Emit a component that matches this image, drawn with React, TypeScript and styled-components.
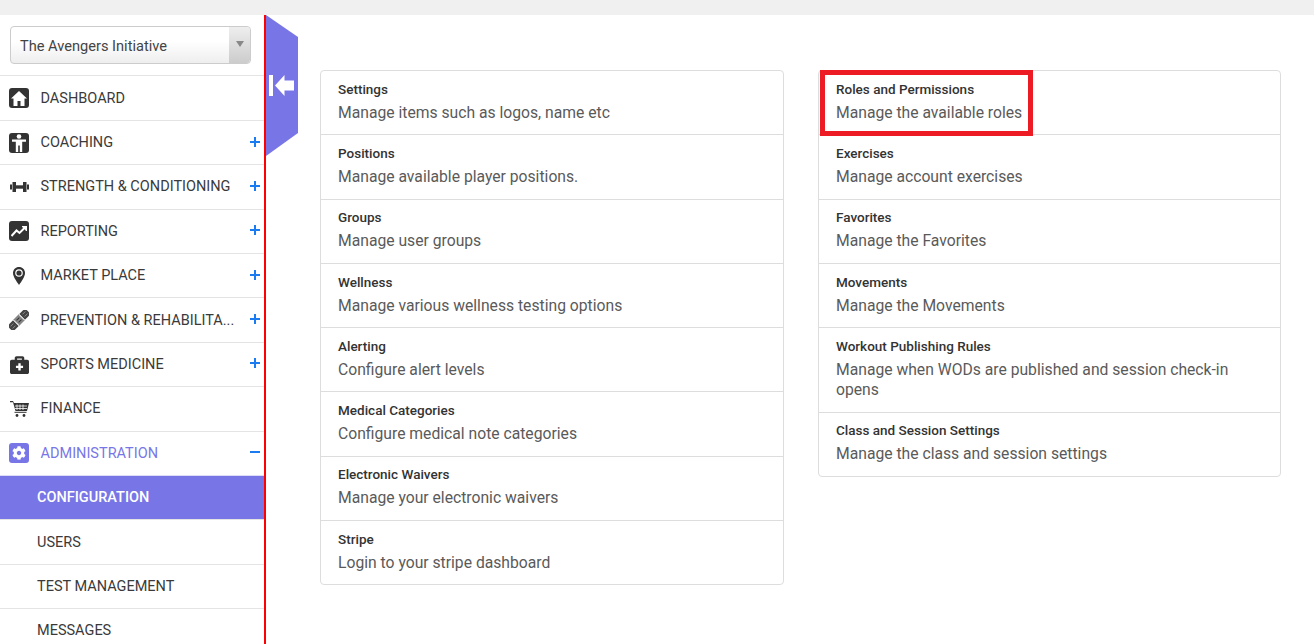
import * as React from "react";
import { createGlobalStyle, styled } from "styled-components";
import { FaBriefcaseMedical, FaCog } from "react-icons/fa";

const GlobalStyle = createGlobalStyle`
    html, body {
        margin: 0;
        height: 100%;
        overflow: hidden;
        background: #fff;
        font-family: Roboto, "Liberation Sans", sans-serif;
    }
    * {
        box-sizing: border-box;
    }
`;

const Page = styled.div`
    display: flex;
    flex-direction: column;
    height: 644px;
    overflow: hidden;
`;

const TopBar = styled.div`
    height: 15px;
    flex: none;
    background: #f0f0f0;
`;

const Body = styled.div`
    display: flex;
    flex: 1;
    min-height: 0;
`;

const Sidebar = styled.aside`
    position: relative;
    flex: none;
    width: 266px;
    border-right: 2px solid #f00;
`;

const SelectWrap = styled.div`
    height: 60.45px;
    padding: 11px 13px 0 10px;
`;

const Select = styled.div`
    display: flex;
    height: 38px;
    border: 1px solid #ccc;
    border-radius: 4px;
    background: linear-gradient(#fff 40%, #eee);
    color: #444;
    font-size: 14.6px;
    line-height: 38px;
`;

const SelectText = styled.span`
    flex: 1;
    padding-left: 9px;
`;

const SelectArrow = styled.span`
    display: flex;
    width: 21px;
    align-items: center;
    justify-content: center;
    background: linear-gradient(#eee, #ccc);
    border-radius: 0 4px 4px 0;

    &::after {
        content: "";
        margin-top: -2px;
        border-left: 4px solid transparent;
        border-right: 4px solid transparent;
        border-top: 6px solid #888;
    }
`;

const NavRow = styled.div<{ $active?: boolean }>`
    display: flex;
    align-items: center;
    height: 44.4px;
    padding-left: 9px;
    border-top: 1px solid #e4e4e4;
    color: ${props => (props.$active ? "#7876e6" : "#3a3a3a")};
    font-size: 14.5px;
    white-space: nowrap;
`;

const NavIcon = styled.span`
    display: flex;
    flex: none;
    width: 20px;
    height: 20px;
    margin-right: 11.5px;
    align-items: center;
    justify-content: center;
`;

const IconTile = styled.span<{ $color?: string }>`
    display: flex;
    width: 20px;
    height: 20px;
    align-items: center;
    justify-content: center;
    border-radius: 3px;
    background: ${props => props.$color ?? "#333"};
    color: #fff;
`;

const NavLabel = styled.span`
    flex: 1;
    min-width: 0;
`;

const NavToggle = styled.span`
    position: relative;
    flex: none;
    width: 10px;
    height: 10px;
    margin: 0 4px 2px 0;

    &::before {
        content: "";
        position: absolute;
        left: 0;
        right: 0;
        top: 4px;
        height: 2px;
        background: #1a7cf0;
    }
`;

const NavPlus = styled(NavToggle)`
    &::after {
        content: "";
        position: absolute;
        top: 0;
        bottom: 0;
        left: 4px;
        width: 2px;
        background: #1a7cf0;
    }
`;

const SubRow = styled.div<{ $active?: boolean }>`
    display: flex;
    align-items: center;
    height: 44.4px;
    padding-left: 37px;
    border-top: 1px solid ${props => (props.$active ? "#dcdcf5" : "#e4e4e4")};
    background: ${props => (props.$active ? "#7876e6" : "transparent")};
    color: ${props => (props.$active ? "#fff" : "#3a3a3a")};
    font-size: 14.5px;
    font-weight: ${props => (props.$active ? 500 : 400)};
`;

const CollapseHandle = styled.div`
    position: absolute;
    top: 0;
    left: 266px;
    display: flex;
    width: 32px;
    height: 141px;
    align-items: center;
    justify-content: center;
    padding-bottom: 1px;
    padding-right: 1px;
    background: #7876e6;
    clip-path: polygon(0 0, 100% 15.6%, 100% 83.6%, 0 100%);
    color: #fff;
`;

const Main = styled.main`
    display: grid;
    flex: 1;
    grid-template-columns: 464px 463px;
    column-gap: 34px;
    align-items: start;
    padding: 55px 0 0 54px;
`;

const Card = styled.div`
    position: relative;
    border: 1px solid #ddd;
    border-radius: 4px;
`;

const CardItem = styled.div`
    padding: 9.8px 17px 11.18px;
    border-top: 1px solid #ddd;

    &:first-child {
        border-top: 0;
    }
`;

const CardTitle = styled.div`
    color: #333;
    font-size: 13.5px;
    font-weight: 500;
    line-height: 17px;
    margin-bottom: 5px;
`;

const CardText = styled.div`
    color: #5a5a5a;
    font-size: 15.7px;
    line-height: 20.3px;
`;

const Highlight = styled.div`
    position: absolute;
    top: -1px;
    left: 1px;
    width: 213px;
    height: 66px;
    border: 5px solid #ed1c24;
`;

const HomeIcon = () => (
    <svg width="16" height="15" viewBox="0 0 16 15" fill="#fff">
        <path d="M8 0 16 7.500h-2.500V15H9.500v-5h-3v5H2.500V7.500H0z" />
    </svg>
);

const MaleIcon = () => (
    <svg width="16" height="18" viewBox="0 0 16 18" fill="#fff">
        <circle cx="8" cy="2.500" r="2.300" />
        <path d="M1 5.500h14v2.200h-3.800V18H8.800v-6.500H7.200V18H4.800V7.700H1z" />
    </svg>
);

const DumbbellIcon = () => (
    <svg width="19" height="12" viewBox="0 0 19 12" fill="#333">
        <path d="M0 3.500h2v5H0zM2.500 1h3.500v10H2.500zM13 1h3.500v10H13zM17 3.500h2v5h-2z" />
        <path d="M6 4.300h7v3.400H6z" />
    </svg>
);

const ChartIcon = () => (
    <svg width="16" height="11" viewBox="0 0 16 11" fill="none" stroke="#fff" strokeWidth="2">
        <path d="M0.500 10 5.500 4.500 8.500 7 14 1.500" />
        <path d="M11 0.500h4.500V5" strokeWidth="1.600" fill="#fff" />
    </svg>
);

const MarkerIcon = () => (
    <svg width="12" height="18" viewBox="0 0 12 18">
        <path d="M6 0C2.600 0 0 2.600 0 6c0 3.500 3.500 8.500 6 12 2.500-3.500 6-8.500 6-12 0-3.400-2.600-6-6-6z" fill="#333" />
        <circle cx="6" cy="6" r="3.800" fill="#fff" />
        <circle cx="6" cy="6" r="2.600" fill="#333" />
    </svg>
);

const BandAidIcon = () => (
    <svg width="20" height="20" viewBox="0 0 20 20">
        <g transform="rotate(-45 10 10)">
            <rect x="-2.500" y="6" width="25" height="8" rx="3.500" fill="#444" />
            <rect x="6" y="6" width="8" height="8" fill="#888" />
            <path d="M6 6v8M14 6v8" stroke="#fff" strokeWidth="1" />
            <path d="M-0.500 8.500h4M-0.500 11.500h4M16.500 8.500h4M16.500 11.500h4" stroke="#999" strokeWidth="0.800" />
            <path d="M8 8.500h4M8 11.500h4" stroke="#333" strokeWidth="1" />
        </g>
    </svg>
);

const CartIcon = () => (
    <svg width="19" height="16" viewBox="0 0 19 16" fill="#333">
        <path d="M0 0h3l1 2h15l-2 8H5.500L3 1.300H0z" />
        <path d="M4.500 10.800h12v1h-12z" />
        <circle cx="7" cy="14.500" r="1.400" />
        <circle cx="14" cy="14.500" r="1.400" />
        <path d="M7 3.500v5.500M10 3.500v5.500M13 3.500v5.500M5 5h12M5 7.500h12" stroke="#fff" strokeWidth="0.800" />
    </svg>
);

const collapseIcon = (
    <svg width="25" height="21" viewBox="0 0 25 21" fill="currentColor">
        <rect x="0" y="0" width="4" height="21" />
        <path d="M6 10.500 15.500 0v5.500H25v10h-9.500V21z" />
    </svg>
);

type NavEntry = {
    label: string;
    icon: React.ReactNode;
    expandable?: boolean;
};

const navEntries: NavEntry[] = [
    { label: "DASHBOARD", icon: <IconTile><HomeIcon /></IconTile> },
    { label: "COACHING", icon: <IconTile><MaleIcon /></IconTile>, expandable: true },
    { label: "STRENGTH & CONDITIONING", icon: <DumbbellIcon />, expandable: true },
    { label: "REPORTING", icon: <IconTile><ChartIcon /></IconTile>, expandable: true },
    { label: "MARKET PLACE", icon: <MarkerIcon />, expandable: true },
    { label: "PREVENTION & REHABILITA...", icon: <BandAidIcon />, expandable: true },
    { label: "SPORTS MEDICINE", icon: <FaBriefcaseMedical size={19} color="#333" />, expandable: true },
    { label: "FINANCE", icon: <CartIcon /> },
];

const leftItems = [
    ["Settings", "Manage items such as logos, name etc"],
    ["Positions", "Manage available player positions."],
    ["Groups", "Manage user groups"],
    ["Wellness", "Manage various wellness testing options"],
    ["Alerting", "Configure alert levels"],
    ["Medical Categories", "Configure medical note categories"],
    ["Electronic Waivers", "Manage your electronic waivers"],
    ["Stripe", "Login to your stripe dashboard"],
];

const rightItems = [
    ["Roles and Permissions", "Manage the available roles"],
    ["Exercises", "Manage account exercises"],
    ["Favorites", "Manage the Favorites"],
    ["Movements", "Manage the Movements"],
    ["Workout Publishing Rules", "Manage when WODs are published and session check-in opens"],
    ["Class and Session Settings", "Manage the class and session settings"],
];

const subEntries = ["CONFIGURATION", "USERS", "TEST MANAGEMENT", "MESSAGES"];

const renderItems = (items: string[][]) =>
    items.map(([title, text]) => (
        <CardItem key={title}>
            <CardTitle>{title}</CardTitle>
            <CardText>{text}</CardText>
        </CardItem>
    ));

const App = () => (
    <Page>
        <GlobalStyle />
        <TopBar />
        <Body>
            <Sidebar>
                <SelectWrap>
                    <Select>
                        <SelectText>The Avengers Initiative</SelectText>
                        <SelectArrow />
                    </Select>
                </SelectWrap>
                {navEntries.map(entry => (
                    <NavRow key={entry.label}>
                        <NavIcon>{entry.icon}</NavIcon>
                        <NavLabel>{entry.label}</NavLabel>
                        {entry.expandable && <NavPlus />}
                    </NavRow>
                ))}
                <NavRow $active>
                    <NavIcon>
                        <IconTile $color="#7876e6">
                            <FaCog size={14} />
                        </IconTile>
                    </NavIcon>
                    <NavLabel>ADMINISTRATION</NavLabel>
                    <NavToggle />
                </NavRow>
                {subEntries.map((label, index) => (
                    <SubRow key={label} $active={index === 0}>
                        {label}
                    </SubRow>
                ))}
                <CollapseHandle>{collapseIcon}</CollapseHandle>
            </Sidebar>
            <Main>
                <Card>{renderItems(leftItems)}</Card>
                <Card>
                    {renderItems(rightItems)}
                    <Highlight />
                </Card>
            </Main>
        </Body>
    </Page>
);

export default App;
